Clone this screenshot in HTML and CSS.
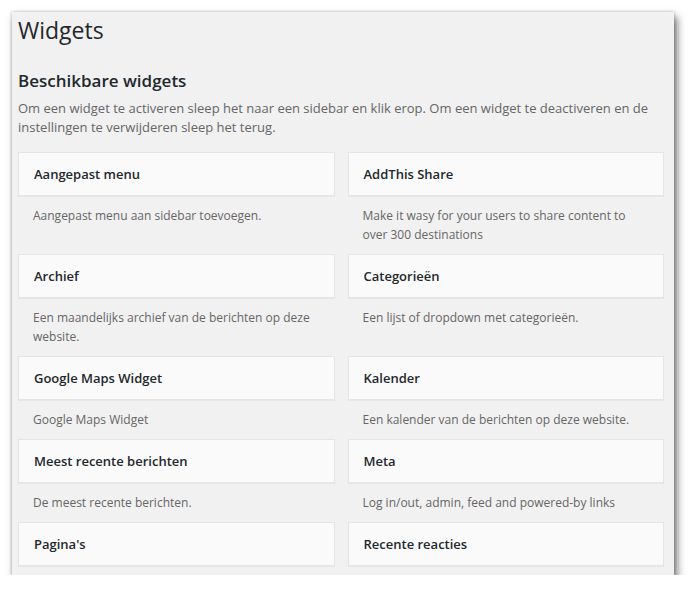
FILE: index.html
```html
<!DOCTYPE html>
<html lang="nl">
<head>
<meta charset="utf-8">
<title>Widgets</title>
<link rel="stylesheet" href="styles.css">
</head>
<body>
<div class="frame">
  <h1 class="page-title">Widgets</h1>
  <h2 class="section-title">Beschikbare widgets</h2>
  <p class="intro">Om een widget te activeren sleep het naar een sidebar en klik erop. Om een widget te deactiveren en de instellingen te verwijderen sleep het terug.</p>
  <div class="widget-list">
    <div class="widget">
      <div class="widget-top"><h3 class="widget-title">Aangepast menu</h3></div>
      <div class="widget-desc">Aangepast menu aan sidebar toevoegen.</div>
    </div>
    <div class="widget">
      <div class="widget-top"><h3 class="widget-title">AddThis Share</h3></div>
      <div class="widget-desc">Make it wasy for your users to share content to over 300 destinations</div>
    </div>
    <div class="widget">
      <div class="widget-top"><h3 class="widget-title">Archief</h3></div>
      <div class="widget-desc">Een maandelijks archief van de berichten op deze website.</div>
    </div>
    <div class="widget">
      <div class="widget-top"><h3 class="widget-title">Categorieën</h3></div>
      <div class="widget-desc">Een lijst of dropdown met categorieën.</div>
    </div>
    <div class="widget">
      <div class="widget-top"><h3 class="widget-title">Google Maps Widget</h3></div>
      <div class="widget-desc">Google Maps Widget</div>
    </div>
    <div class="widget">
      <div class="widget-top"><h3 class="widget-title">Kalender</h3></div>
      <div class="widget-desc">Een kalender van de berichten op deze website.</div>
    </div>
    <div class="widget">
      <div class="widget-top"><h3 class="widget-title">Meest recente berichten</h3></div>
      <div class="widget-desc">De meest recente berichten.</div>
    </div>
    <div class="widget">
      <div class="widget-top"><h3 class="widget-title">Meta</h3></div>
      <div class="widget-desc">Log in/out, admin, feed and powered-by links</div>
    </div>
    <div class="widget">
      <div class="widget-top"><h3 class="widget-title">Pagina's</h3></div>
    </div>
    <div class="widget">
      <div class="widget-top"><h3 class="widget-title">Recente reacties</h3></div>
    </div>
  </div>
</div>
</body>
</html>
```
FILE: styles.css
```css
html, body {
  margin: 0;
  padding: 0;
  background: #ffffff;
}
body {
  font-family: "Open Sans", "Liberation Sans", sans-serif;
  color: #23282d;
}
.frame {
  margin: 12px 0 0 12px;
  width: 662px;
  height: 563px;
  box-sizing: border-box;
  padding: 4px 10px 0 6px;
  background: #f1f1f1;
  overflow: hidden;
  box-shadow: 0 0 3px rgba(0,0,0,0.25), 3px 5px 8px rgba(0,0,0,0.55);
}
.page-title {
  margin: 0;
  font-size: 23px;
  font-weight: 400;
  line-height: 1.3;
  color: #23282d;
}
.section-title {
  margin: 23px 0 0;
  font-size: 17px;
  font-weight: 600;
  line-height: 1.4;
  color: #23282d;
}
.intro {
  margin: 6px 0 0;
  font-size: 13px;
  line-height: 1.45;
  color: #666666;
}
.widget-list {
  margin-top: 16px;
  display: grid;
  grid-template-columns: 1fr 1fr;
  column-gap: 13px;
}
.widget-top {
  background: #fafafa;
  border: 1px solid #e5e5e5;
  box-shadow: 0 1px 1px rgba(0,0,0,0.04);
}
.widget-title {
  margin: 0;
  padding: 15px 15px 14px;
  font-size: 13px;
  font-weight: 600;
  line-height: 1;
  color: #23282d;
}
.widget-desc {
  padding: 10px 15px 10px;
  font-size: 12px;
  line-height: 19px;
  color: #666666;
}
```
